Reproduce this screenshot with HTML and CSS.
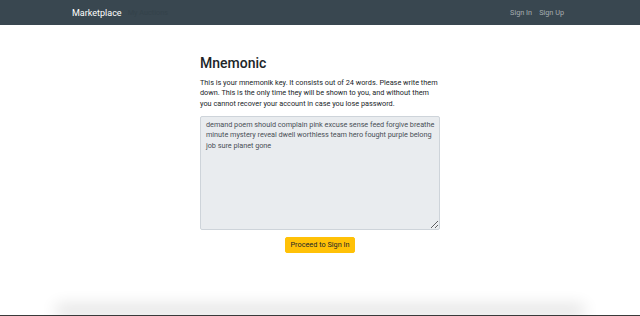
FILE: index.html
```html
<!DOCTYPE html>
<html lang="en">
<head>
<meta charset="utf-8">
<title>Mnemonic</title>
<link rel="stylesheet" href="styles.css">
</head>
<body>
<nav class="navbar">
  <div class="nav-left">
    <a class="brand" href="#">Marketplace</a>
    <a class="ghost-link" href="#">My Auctions</a>
  </div>
  <div class="nav-right">
    <a class="nav-link" href="#">Sign In</a>
    <a class="nav-link" href="#">Sign Up</a>
  </div>
</nav>
<main class="content">
  <h2 class="title">Mnemonic</h2>
  <p class="lead">This is your mnemonik key. It consists out of 24 words. Please write them down. This is the only time they will be shown to you, and without them you cannot recover your account in case you lose password.</p>
  <textarea class="mnemonic" readonly>demand poem should complain pink excuse sense feed forgive breathe minute mystery reveal dwell worthless team hero fought purple belong job sure planet gone</textarea>
  <div class="actions">
    <button class="btn-warning" type="button">Proceed to Sign In</button>
  </div>
</main>
<footer class="footer"><div class="footer-inner"></div></footer>
</body>
</html>
```
FILE: styles.css
```css
html, body {
  margin: 0;
  padding: 0;
  height: 100%;
}
body {
  font-family: Roboto, "Liberation Sans", sans-serif;
  color: #212529;
  background: #fff;
  display: flex;
  flex-direction: column;
  overflow: hidden;
}
.navbar {
  height: 25px;
  background: #394750;
  display: flex;
  align-items: center;
  justify-content: space-between;
  padding: 0 76px 0 72px;
  flex-shrink: 0;
}
.nav-left, .nav-right {
  display: flex;
  align-items: center;
}
.brand {
  color: #fff;
  font-size: 9px;
  text-decoration: none;
}
.ghost-link {
  color: #34424a;
  font-size: 7.3px;
  margin-left: 6px;
  text-decoration: none;
}
.nav-right {
  gap: 7px;
}
.nav-link {
  color: rgba(255, 255, 255, 0.55);
  font-size: 7.3px;
  text-decoration: none;
}
.content {
  width: 240px;
  margin: 0 auto;
  padding-top: 30px;
  flex: 1;
  display: flex;
  flex-direction: column;
}
.title {
  margin: 0 0 6px;
  font-size: 14px;
  font-weight: 500;
  line-height: 17px;
}
.lead {
  margin: 0 0 7px;
  font-size: 7.3px;
  line-height: 10.3px;
}
.mnemonic {
  box-sizing: border-box;
  width: 240px;
  height: 114px;
  margin: 0;
  padding: 3px 4px 3px 5px;
  font-family: Roboto, "Liberation Sans", sans-serif;
  font-size: 7.3px;
  letter-spacing: -0.03px;
  line-height: 10.5px;
  color: #495057;
  background: #e9ecef;
  border: 1px solid #ced4da;
  border-radius: 2px;
  resize: vertical;
  outline: none;
  overflow: hidden;
}
.actions {
  display: flex;
  justify-content: center;
  margin-top: 7px;
}
.btn-warning {
  height: 16px;
  width: 70px;
  padding: 0;
  font-family: Roboto, "Liberation Sans", sans-serif;
  font-size: 7.3px;
  font-weight: 400;
  color: #212529;
  background: #ffc107;
  border: 1px solid #ffc107;
  border-radius: 2px;
  cursor: pointer;
}
.footer {
  height: 1px;
  flex-shrink: 0;
  background: #3a3a3a;
  display: flex;
  justify-content: center;
}
.footer-inner {
  width: 520px;
  height: 1px;
  box-shadow: 0 -5px 16px 4px rgba(0, 0, 0, 0.16);
}
```
